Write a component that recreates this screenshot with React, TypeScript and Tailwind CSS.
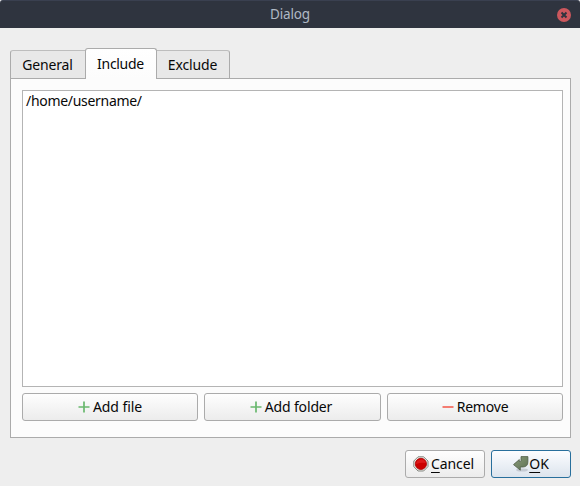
import type { ReactNode } from 'react';

function PlusIcon() {
  return (
    <svg width="12" height="12" viewBox="0 0 12 12" className="shrink-0">
      <path d="M0.5 6H11.5M6 0.5V11.5" stroke="#69b86e" strokeWidth="1.7" fill="none" />
    </svg>
  );
}

function MinusIcon() {
  return (
    <svg width="12" height="12" viewBox="0 0 12 12" className="shrink-0">
      <path d="M0.5 6H11.5" stroke="#f47d72" strokeWidth="2" fill="none" />
    </svg>
  );
}

function StopIcon() {
  return (
    <svg width="16" height="16" viewBox="0 0 16 16" className="shrink-0">
      <path d="M5 .8h5.6L15 5v5.6L10.6 15H5L.8 10.6V5Z" fill="#e9eae6" stroke="#858781" />
      <circle cx="7.9" cy="7.9" r="5.6" fill="#cc0000" stroke="#a90000" strokeWidth=".8" />
      <path d="M3 8a5 5 0 0 1 9.8-1Q8 6 3 8Z" fill="#e42222" opacity=".75" />
    </svg>
  );
}

function ReturnIcon() {
  return (
    <svg width="16" height="16" viewBox="0 0 16 16" className="shrink-0">
      <defs>
        <linearGradient id="arrow" x1="0" y1="0" x2="1" y2="1">
          <stop offset="0" stopColor="#8b9c7b" />
          <stop offset="1" stopColor="#5c7052" />
        </linearGradient>
      </defs>
      <ellipse cx="9" cy="14" rx="6" ry="1.6" fill="#89909a" opacity=".35" />
      <path d="M8 .6h6.9v5.2q0 5-4.9 5.2H7.3v3.2L.5 8.6l5.8-5v1.9h.9q.8 0 .8-.9Z" fill="url(#arrow)" stroke="#4f5d47" strokeWidth=".8" />
    </svg>
  );
}

function ActionButton({ icon, children }: { icon: ReactNode; children: ReactNode }) {
  return (
    <button className="flex h-7 items-center justify-center gap-[3px] rounded-[3px] border border-[#ababab] bg-linear-to-b from-[#fefefe] to-[#ececec] pb-px">
      {icon}
      {children}
    </button>
  );
}

export default function App() {
  return (
    <main className="flex h-[486px] w-[580px] flex-col bg-[#eeeeee] font-['Noto_Sans','Open_Sans',sans-serif] text-[14px] leading-5 text-[#080808]">
      <header className="flex h-7 shrink-0 items-center rounded-t-[3px] border-t border-[#3a4050] bg-[#2f343f] pr-[9px] text-[#afb8c5]">
        <h1 className="flex-1 pb-px pl-[23px] text-center text-[13.5px] tracking-[-0.15px]">Dialog</h1>
        <button aria-label="Close">
          <svg width="14" height="14" viewBox="0 0 14 14">
            <circle cx="7" cy="7" r="7" fill="#cc575d" />
            <path d="m4.5 4.5 5 5m0-5-5 5" stroke="#2f343f" strokeWidth="2" />
          </svg>
        </button>
      </header>

      <div className="flex flex-1 flex-col px-[9px] pt-5 pl-2.5">
        <nav className="z-10 flex h-[31px] items-end tracking-[-0.15px]">
          <button className="h-[29px] w-[75px] rounded-tl-[3px] border border-r-0 border-[#ababab] border-t-[#bdbdbd] bg-[#e8e8e8] pr-px">General</button>
          <button className="h-[31px] w-[72px] rounded-t-[3px] border border-b-0 border-[#ababab] bg-linear-to-b from-white to-[#fcfcfc] pr-px pb-px tracking-[-0.3px]">Include</button>
          <button className="h-[29px] w-[73px] rounded-tr-[3px] border border-l-0 border-[#ababab] border-t-[#bdbdbd] bg-[#e8e8e8] pr-px">Exclude</button>
        </nav>
        <section className="-mt-px flex h-[360px] flex-col border border-[#ababab] bg-[#fcfcfc] px-[7px] pt-[11px] pl-[11px]">
          <div className="h-[297px] w-[541px] border border-[#b4b4b4] bg-white px-[3px] tracking-[-0.3px]">/home/username/</div>
          <div className="mt-1.5 grid w-[541px] grid-cols-[176px_177px_176px] gap-1.5 tracking-[-0.1px]">
            <ActionButton icon={<PlusIcon />}>Add file</ActionButton>
            <ActionButton icon={<PlusIcon />}><span className="pr-[3px] tracking-[-0.15px]">Add folder</span></ActionButton>
            <ActionButton icon={<MinusIcon />}><span className="tracking-[-0.2px]">Remove</span></ActionButton>
          </div>
        </section>
        <footer className="mt-3 flex justify-end gap-1.5 tracking-[-0.1px]">
          <button className="flex h-7 w-20 items-center justify-center gap-0.5 rounded-[3px] border border-[#ababab] bg-linear-to-b from-[#fefefe] to-[#ececec] pr-[3px] pb-px">
            <StopIcon />
            <span><span className="underline decoration-1 underline-offset-[3px]">C</span>ancel</span>
          </button>
          <button className="flex h-7 w-20 items-center justify-center gap-0 rounded-[3px] border border-[#286f9c] bg-linear-to-b from-[#fcfdff] to-[#dce4ed] pb-px">
            <ReturnIcon />
            <span><span className="underline decoration-1 underline-offset-[3px]">O</span>K</span>
          </button>
        </footer>
      </div>
    </main>
  );
}
